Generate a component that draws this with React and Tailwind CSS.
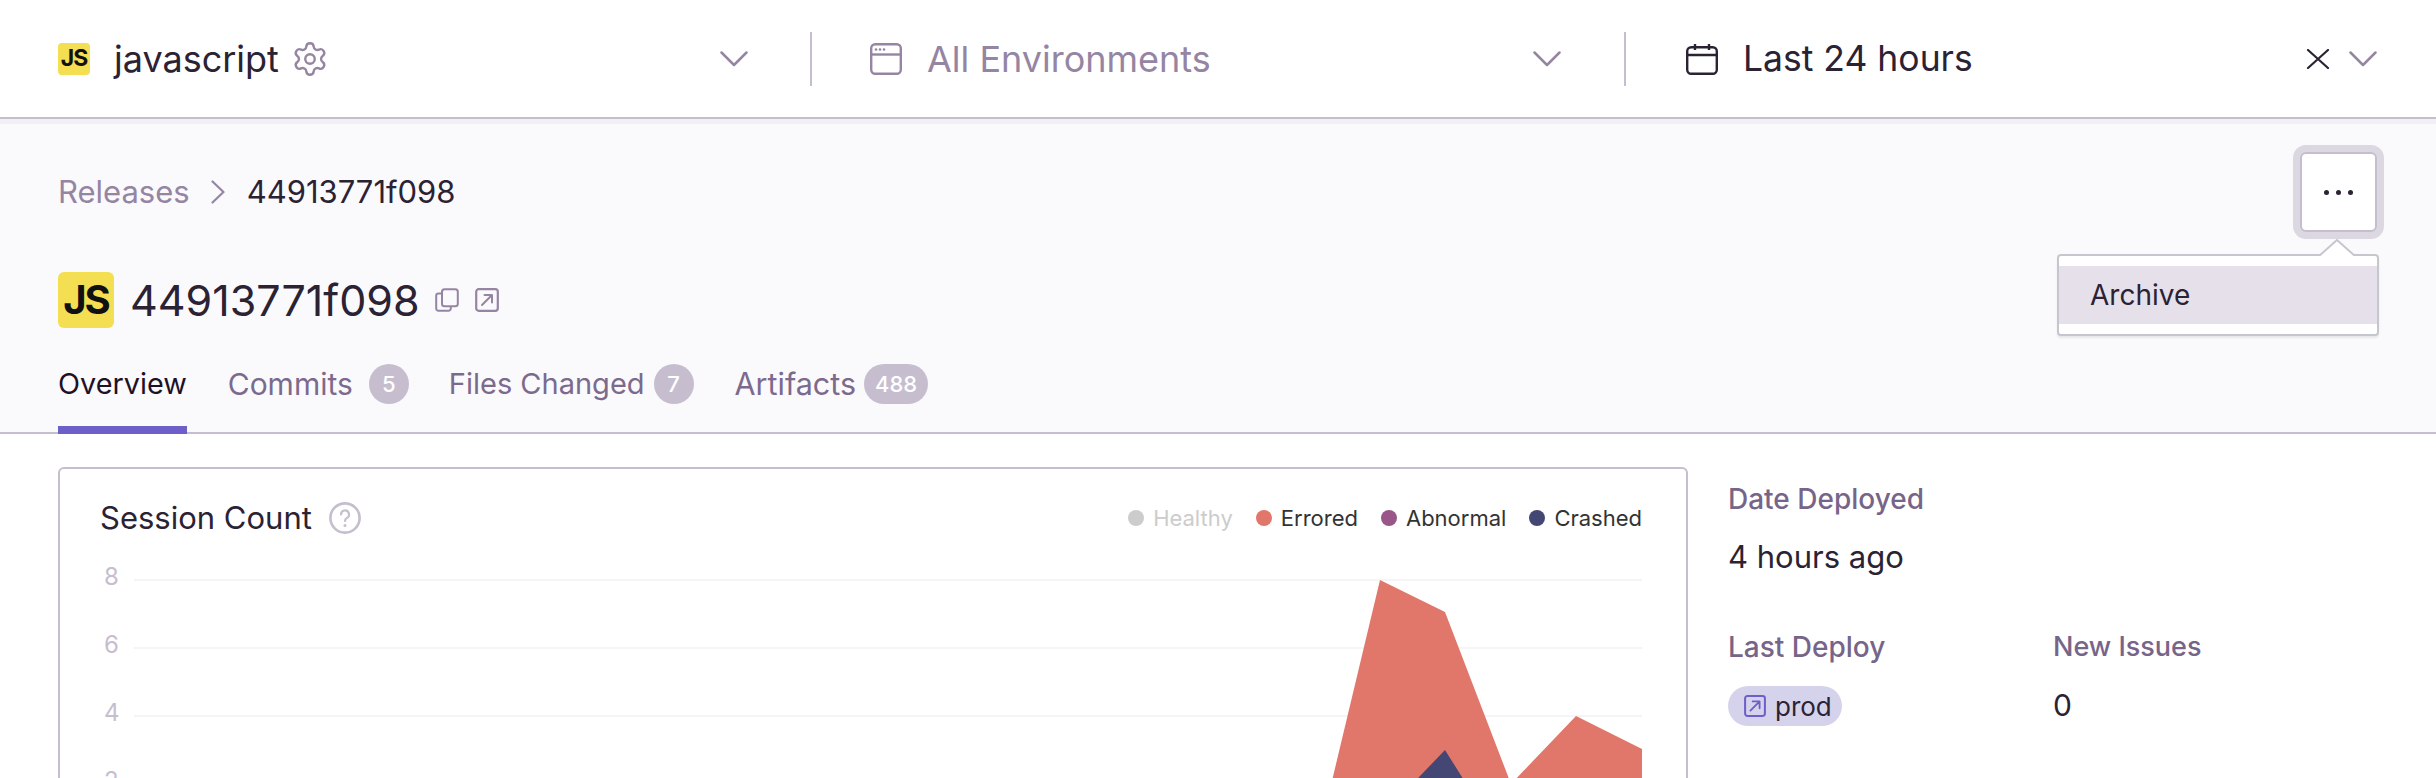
import { Settings } from 'lucide-react'

const font = { fontFamily: 'Inter, sans-serif' }

const tabs = [
  { label: 'Commits', count: '5', size: 'text-[30px]', gap: 'ml-[16px]', offset: 'ml-[41px]' },
  { label: 'Files Changed', count: '7', size: 'text-[29px]', gap: 'ml-[9px]', offset: 'ml-[40px]' },
  { label: 'Artifacts', count: '488', size: 'text-[30.5px]', gap: 'ml-[8px]', offset: 'ml-[41px]' },
]

const legend = [
  { label: 'Healthy', dot: 'bg-[#cccccc]', text: 'text-[#cccccc]' },
  { label: 'Errored', dot: 'bg-[#e1766a]', text: 'text-[#333333]' },
  { label: 'Abnormal', dot: 'bg-[#9a5688]', text: 'text-[#333333]' },
  { label: 'Crashed', dot: 'bg-[#444674]', text: 'text-[#333333]' },
]

function Chevron({ className }) {
  return (
    <svg viewBox="0 0 28 16" fill="none" className={`h-[16px] w-[28px] ${className}`}>
      <path d="M1.5 1.5 14 14 26.5 1.5" stroke="currentColor" strokeWidth="2.5" strokeLinecap="round" strokeLinejoin="round" />
    </svg>
  )
}

function OpenIcon({ className }) {
  return (
    <svg viewBox="0 0 24 24" fill="none" className={className}>
      <rect x="1.2" y="1.2" width="21.6" height="21.6" rx="2.5" stroke="currentColor" strokeWidth="2.2" />
      <path d="M7 17 17 7M9.5 7H17v7.5" stroke="currentColor" strokeWidth="2" strokeLinecap="round" strokeLinejoin="round" />
    </svg>
  )
}

function JsLogo({ className }) {
  return (
    <div className={`flex shrink-0 items-center justify-center bg-[#f4de51] font-bold text-[#111111] ${className}`}>
      JS
    </div>
  )
}

function Chart() {
  const grid = [41, 109, 177, 245]
  return (
    <svg viewBox="0 0 1626 260" className="mt-[3px] block h-[260px] w-[1626px]">
      {grid.map((y) => (
        <line key={y} x1="74" x2="1582" y1={y} y2={y} stroke="#f5f4f7" strokeWidth="2" />
      ))}
      {[['8', 41], ['6', 109], ['4', 177], ['2', 245]].map(([label, y]) => (
        <text key={label} x="44" y={y + 5} fontSize="24" fill="#c6becf" style={font}>{label}</text>
      ))}
      <path d="M1255 313 1320 41 1385 73 1451 245 1516 177 1582 210V313Z" fill="#e1766a" />
      <path d="M1287 313 1385 211 1449 313Z" fill="#444674" />
    </svg>
  )
}

export default function App() {
  return (
    <div className="h-[778px] w-[2436px] overflow-hidden bg-white text-[#2b2233]" style={font}>
      <header className="relative z-10 flex h-[119px] items-center border-b-2 border-[#c6becf] bg-white shadow-[0_5px_0_#f2f0f5]">
        <div className="flex w-[810px] items-center pl-[58px] pr-[62px]">
          <JsLogo className="h-[32px] w-[32px] rounded-[4px] text-[23px] tracking-[-1px]" />
          <span className="ml-[24px] text-[36px] leading-[46px]">javascript</span>
          <Settings className="ml-[12px] h-[38px] w-[38px] text-[#9585a3]" strokeWidth={1.5} />
          <Chevron className="ml-auto text-[#9585a3]" />
        </div>
        <div className="h-[54px] w-[2px] bg-[#c6becf]" />
        <div className="flex w-[812px] items-center pl-[58px] pr-[63px]">
          <svg viewBox="0 0 32 32" fill="none" className="h-[32px] w-[32px] text-[#9585a3]">
            <rect x="1.2" y="1.2" width="29.6" height="29.6" rx="4" stroke="currentColor" strokeWidth="2.4" />
            <path d="M1.5 11.5h29" stroke="currentColor" strokeWidth="2.4" />
            <circle cx="6" cy="6.5" r="1.3" fill="currentColor" />
            <circle cx="10" cy="6.5" r="1.3" fill="currentColor" />
            <circle cx="14" cy="6.5" r="1.3" fill="currentColor" />
          </svg>
          <span className="ml-[25px] text-[36px] leading-[46px] text-[#9585a3]">All Environments</span>
          <Chevron className="ml-auto text-[#9585a3]" />
        </div>
        <div className="h-[54px] w-[2px] bg-[#c6becf]" />
        <div className="flex flex-1 items-center pl-[60px] pr-[59px]">
          <svg viewBox="0 0 32 32" fill="none" className="h-[32px] w-[32px] text-[#2b2233]">
            <rect x="1.2" y="4.2" width="29.6" height="26.6" rx="4" stroke="currentColor" strokeWidth="2.4" />
            <path d="M1.5 12h29M9 1v6M23 1v6" stroke="currentColor" strokeWidth="2.4" />
          </svg>
          <span className="ml-[25px] text-[35.5px] leading-[46px]">Last 24 hours</span>
          <svg viewBox="0 0 24 20" fill="none" className="ml-auto h-[20px] w-[24px] text-[#2b2233]">
            <path d="M2 1l20 18M22 1 2 19" stroke="currentColor" strokeWidth="2.2" strokeLinecap="round" />
          </svg>
          <Chevron className="ml-[19px] text-[#9585a3]" />
        </div>
      </header>

      <section className="border-b-2 border-[#c6becf] bg-[#faf9fb] px-[58px] pt-[33px]">
        <div className="flex h-[80px] items-center">
          <span className="text-[31px] text-[#9585a3]">Releases</span>
          <svg viewBox="0 0 14 24" fill="none" className="ml-[21px] h-[24px] w-[14px] text-[#9585a3]">
            <path d="M1.5 1.5 12.5 12 1.5 22.5" stroke="currentColor" strokeWidth="2.2" strokeLinecap="round" strokeLinejoin="round" />
          </svg>
          <span className="ml-[22px] text-[31px]">44913771f098</span>

          <div className="relative ml-auto mr-[1px]">
            <button
              type="button"
              className="flex h-[80px] w-[77px] items-center justify-center gap-[7px] rounded-[6px] border-2 border-[#c6becf] bg-white shadow-[0_0_0_7px_#dcd8e2]"
            >
              <span className="h-[5px] w-[5px] rounded-full bg-[#2b2233]" />
              <span className="h-[5px] w-[5px] rounded-full bg-[#2b2233]" />
              <span className="h-[5px] w-[5px] rounded-full bg-[#2b2233]" />
            </button>
            <div className="absolute right-[-2px] top-[102px] z-20 w-[322px] rounded-[4px] border-2 border-[#c6c6ce] bg-white py-[10px] shadow-[0_2px_2px_rgba(0,0,0,0.08)]">
              <svg viewBox="0 0 36 17" className="absolute right-[22px] top-[-17px] h-[17px] w-[36px]">
                <path d="M0 17 18 1 36 17" fill="white" stroke="#c6c6ce" strokeWidth="2" />
              </svg>
              <div className="flex h-[58px] items-center bg-[#e6e0eb] pl-[31px] text-[28px]">Archive</div>
            </div>
          </div>
        </div>

        <div className="mt-[40px] flex h-[56px] items-center">
          <JsLogo className="h-[56px] w-[56px] rounded-[6px] text-[40px] tracking-[-2px]" />
          <h1 className="ml-[16px] text-[43px] font-normal">44913771f098</h1>
          <svg viewBox="0 0 24 24" fill="none" className="ml-[15px] h-[24px] w-[24px] text-[#9585a3]">
            <rect x="7" y="1.2" width="15.8" height="17" rx="2.5" stroke="currentColor" strokeWidth="2" />
            <path d="M7 5.5H3.5A2.3 2.3 0 0 0 1.2 7.8v12.7a2.3 2.3 0 0 0 2.3 2.3h10a2.3 2.3 0 0 0 2.3-2.3V18" stroke="currentColor" strokeWidth="2" />
          </svg>
          <OpenIcon className="ml-[16px] h-[24px] w-[24px] text-[#9585a3]" />
        </div>

        <nav className="-mb-[2px] mt-[36px] flex h-[70px] items-start">
          <div className="flex h-[70px] items-start border-b-[8px] border-[#6c5fc7]">
            <span className="text-[28.8px] leading-[40px] text-[#1d1127]">Overview</span>
          </div>
          {tabs.map((tab) => (
            <div key={tab.label} className={`flex h-[40px] items-center ${tab.offset}`}>
              <span className={`${tab.size} text-[#7c6a8e]`}>{tab.label}</span>
              <span className={`flex h-[40px] min-w-[40px] items-center justify-center rounded-full bg-[#c6becf] px-[11px] text-[22px] font-medium text-white ${tab.gap}`}>
                {tab.count}
              </span>
            </div>
          ))}
        </nav>
      </section>

      <main className="flex items-start px-[58px] pt-[33px]">
        <div className="h-[500px] w-[1630px] shrink-0 rounded-[6px] border-2 border-[#c6becf] bg-white">
          <div className="flex items-center pl-[40px] pr-[44px] pt-[31px]">
            <span className="text-[31px] leading-[36px]">Session Count</span>
            <svg viewBox="0 0 32 32" fill="none" className="ml-[17px] h-[32px] w-[32px] text-[#c6becf]">
              <circle cx="16" cy="16" r="14.6" stroke="currentColor" strokeWidth="2.6" />
              <path d="M12 12.5a4 4 0 1 1 6 3.4c-1.4.9-2 1.6-2 3.1" stroke="currentColor" strokeWidth="2.2" strokeLinecap="round" />
              <circle cx="16" cy="23.5" r="1.5" fill="currentColor" />
            </svg>
            <div className="ml-auto flex items-center gap-[23px]">
              {legend.map((item) => (
                <div key={item.label} className="flex items-center gap-[9px]">
                  <span className={`h-[16px] w-[16px] rounded-full ${item.dot}`} />
                  <span className={`text-[22px] leading-[28px] ${item.text}`}>{item.label}</span>
                </div>
              ))}
            </div>
          </div>
          <Chart />
        </div>

        <aside className="ml-[40px] flex-1 pt-[14px]">
          <h4 className="text-[28px] font-medium leading-[36px] text-[#776589]">Date Deployed</h4>
          <p className="mt-[22px] text-[31px] leading-[36px]">4 hours ago</p>
          <div className="mt-[54px] flex">
            <div className="w-[325px]">
              <h4 className="text-[28px] font-medium leading-[36px] text-[#776589]">Last Deploy</h4>
              <div className="mt-[21px] flex h-[40px] w-[114px] items-center rounded-full bg-[#d5d3ec] pl-[16px] text-[26px]">
                <OpenIcon className="h-[22px] w-[22px] text-[#6c5fc7]" />
                <span className="ml-[9px]">prod</span>
              </div>
            </div>
            <div>
              <h4 className="text-[27px] font-medium leading-[36px] text-[#776589]">New Issues</h4>
              <p className="mt-[20px] text-[30px] leading-[40px]">0</p>
            </div>
          </div>
        </aside>
      </main>
    </div>
  )
}
